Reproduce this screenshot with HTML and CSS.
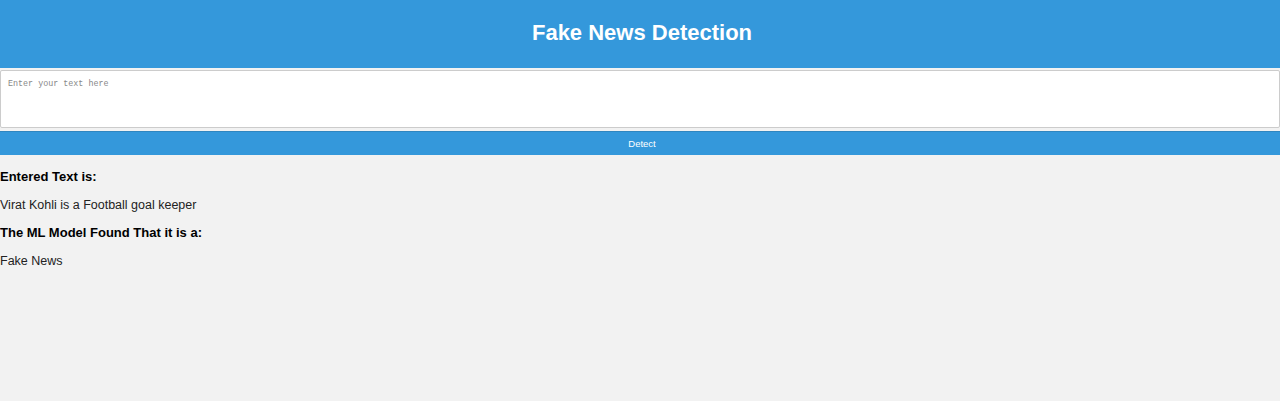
FILE: index.html
```html
<!DOCTYPE html>
<html>
<head>
<meta charset="utf-8">
<link rel="stylesheet" href="styles.css">
</head>
<body>
<header class="banner"><h1 class="title">Fake News Detection</h1></header>
<form class="form">
<textarea class="input" placeholder="Enter your text here"></textarea>
<button class="btn" type="button">Detect</button>
</form>
<section class="result">
<h3 class="label">Entered Text is:</h3>
<p class="value">Virat Kohli is a Football goal keeper</p>
<h3 class="label">The ML Model Found That it is a:</h3>
<p class="value">Fake News</p>
</section>
</body>
</html>
```
FILE: styles.css
```css
html, body { margin: 0; padding: 0; }
body {
  background: #f2f2f2;
  font-family: "Liberation Sans", Arial, sans-serif;
  color: #111;
  height: 401px;
  overflow: hidden;
}
.banner {
  background: #3498db;
  height: 68px;
  display: flex;
  align-items: center;
  justify-content: center;
  padding: 0 0 2px 4px;
  box-sizing: border-box;
}
.title {
  margin: 0;
  color: #fff;
  font-size: 22px;
  font-weight: bold;
}
.form {
  display: flex;
  flex-direction: column;
  padding-top: 2px;
}
.input {
  box-sizing: border-box;
  width: 100%;
  height: 58px;
  margin: 0;
  border: 1px solid #ccc;
  border-radius: 2px;
  background: #fff;
  font-family: "Liberation Mono", "Courier New", monospace;
  font-size: 8.4px;
  padding: 8px 7px;
  resize: none;
  display: block;
}
.input::placeholder { color: #888; }
.btn {
  margin-top: 3px;
  height: 24px;
  border: none;
  border-top: 1px solid #2f86c0;
  background: #3498db;
  color: #fff;
  font-family: "Liberation Sans", Arial, sans-serif;
  font-size: 9.5px;
  padding: 0 0 1px 4px;
}
.result { padding-top: 14px; }
.label {
  margin: 0;
  font-size: 13px;
  font-weight: bold;
  color: #000;
  line-height: 15px;
}
.value {
  margin: 14px 0 12px;
  font-size: 12.5px;
  line-height: 15px;
  color: #222;
}
```
